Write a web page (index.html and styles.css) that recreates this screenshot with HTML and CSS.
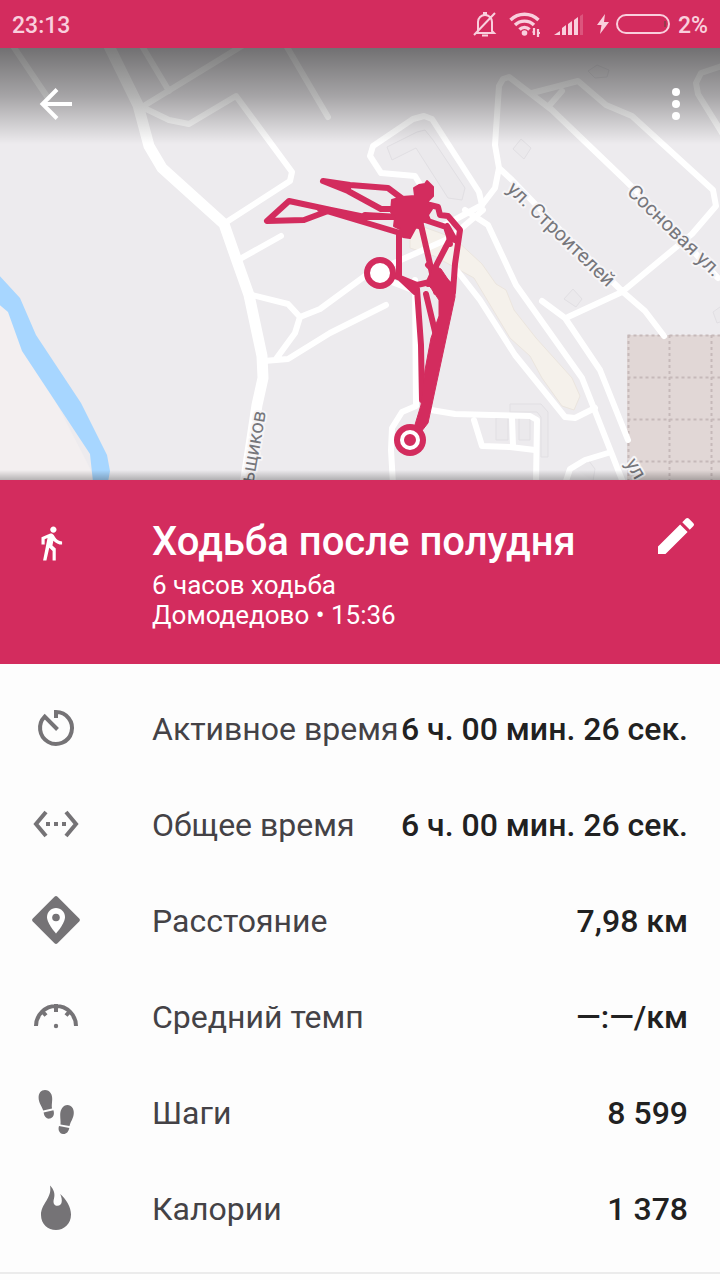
FILE: index.html
```html
<!DOCTYPE html>
<html lang="ru">
<head>
<meta charset="utf-8">
<meta name="viewport" content="width=device-width, initial-scale=1">
<title>Ходьба после полудня</title>
<link rel="stylesheet" href="styles.css">
</head>
<body>
<div class="status-bar">
  <time class="clock">23:13</time>
  <div class="status-icons">
    <svg class="bell" viewBox="0 0 24 26" width="24" height="26"><path d="M5 20V11a7 7 0 0 1 14 0v9l2 2H3zM9 24.500h6M1 24 22 2" fill="none" stroke="currentColor" stroke-width="2"/><path d="M10 1h4v3h-4z" fill="currentColor"/></svg>
    <svg class="wifi" viewBox="0 0 32 26" width="32" height="26"><path d="M1.500 9a20 20 0 0 1 28 0M6 14a13.500 13.500 0 0 1 19 0M10.500 18.500a7 7 0 0 1 10 0" fill="none" stroke="currentColor" stroke-width="3.400"/><circle cx="15.500" cy="22" r="2.800" fill="currentColor"/><path d="M25 17v7M29 18v8M23.500 21H25M29 22h2" stroke="currentColor" stroke-width="2.200"/></svg>
    <svg class="signal" viewBox="0 0 32 26" width="32" height="26"><path d="M1 24l6-4v4zM9 17l4-3v10H9zM15 13l4-3v14h-4zM21 9l4-3v18h-4z" fill="currentColor"/><path d="M27 5l3-2v21h-3z" fill="currentColor" opacity=".25"/></svg>
    <svg class="bolt" viewBox="0 0 12 20" width="12" height="20"><path d="M8 0 0 11h4.500L3 20l9-12H7z" fill="currentColor"/></svg>
    <svg class="battery" viewBox="0 0 54 20" width="54" height="20"><rect x="1" y="1" width="52" height="18" rx="9" fill="none" stroke="currentColor" stroke-width="2"/><path d="M49 7v6" stroke="#5a4a3c" stroke-width="1"/></svg>
    <span class="percent">2%</span>
  </div>
</div>

<main>
  <section class="map" aria-label="Карта маршрута">
    <svg class="map-canvas" viewBox="0 48 720 432" preserveAspectRatio="xMidYMid slice">
      <rect y="48" width="720" height="432" fill="#edebee"/>
      <path d="M0 290 24 340 96 480H0z" fill="#f3eff0"/>
      <path d="M-4 272 20 298 36 335 81 403 107 455 110 471 108 482H93L90 454 22 351 8 312-4 302z" fill="#a7d6ff"/>
      <path d="M627 335h95v147H627z" fill="#e1d7d6"/>
      <path d="M627.500 335.500H720M627.500 377.500H720M627.500 419.500H720M627.500 461.500H720M628.500 335v145M669.500 335v145M711.500 335v145" fill="none" stroke="#c6b9b9" stroke-width="2" stroke-dasharray="3 3"/>

      <path d="M410 222l44 16 28 26 14 20 10 6 8 20 22 28 18 20 18 20 8 18-6 14-12-4-20-28-12-22-20-18-36-60-40-22-24-8z" fill="#f5f1eb" stroke="#ebe5de"/>
      <g fill="#ebe9ec" stroke="#e1dfe3">
        <path d="M387 147l30-15 8-2 8 10 32 48-3 12-14-2-32-50-24 12z"/>
        <path d="M521 139l10 9-7 11-11-10zM573 289l9 10-6 8-12-8zM597 65l12 5-2 7-12 1-7-7z"/>
        <path d="M496 418h12v22h-12zM519 418h11v22h-11zM510 404h31l7 8v45h-7v-40l-4-5h-27z"/>
        <path d="M574 468l15-7 6 8-2 12M720 307l-7 5 4 11 6-2"/>
      </g>

      <g fill="none" stroke="#fff" stroke-linecap="round" stroke-linejoin="round">
        <path d="M107 42 138 105 149 146 162 168 224 224 238 264 249 295 262 356 263 378 257 405 245 485" stroke-width="11"/>
        <path d="M13 46 48 98M142 46 169 91M142 107 245 44M142 107 169 120 189 124 236 96 292 172 290 181 225 223M284 42 328 117M281 236 240 259" stroke-width="6"/>
        <path d="M252 295 288 304 300 317 320 309 365 276 450 238 483 210M300 317 295 333 276 359M264 361 288 359 330 333 386 305" stroke-width="6"/>
        <path d="M421 186 415 176 381 173 370 156 373 146 413 119 424 116 432 119 479 192 482 205 445 225M384 279 410 289" stroke-width="6"/>
        <path d="M415 280 416 406 402 412 392 428 391 450 393 484M431 410 455 414 530 416 537 420 536 484" stroke-width="6"/>
        <path d="M482 205 495 188 499 168 495 145 499 86 503 79 509 77 552 110 625 180 660 215 718 278M532 93 578 81 606 105 632 116 713 190 716 206 692 234 622 292 568 317M562 91 548 107M499 168 512 180 570 240 623 292" stroke-width="6"/>
        <path d="M542 301 565 318 600 370 628 440M623 292 645 311 664 336M465 210 488 225 516 285 582 378 624 485" stroke-width="6"/>
        <path d="M455 268 480 300 515 355 565 417 575 418 595 408M608 453 585 460 570 469 565 484M474 420 482 446 510 447 535 450M512 418 513 446" stroke-width="6"/>
        <path d="M722 66 710 70 701 73 696 83 698 94 724 136" stroke-width="6"/>
      </g>

      <g class="street">
        <text transform="translate(506 190) rotate(44)">ул. Строителей</text>
        <text transform="translate(626 193) rotate(44)">Сосновая ул.</text>
        <text transform="translate(266 412) rotate(-80)" text-anchor="end">ьщиков</text>
        <text transform="translate(625 463) rotate(60)">ул</text>
      </g>

      <g fill="none" stroke="#d32c5e" stroke-width="6" stroke-linejoin="round" stroke-linecap="round">
        <path d="M400 209 381 209 348 191 323 181 350 185 388 188 404 200M348 186V190"/>
        <path d="M400 217 365 217 331 210 289 201 267 221 304 220 328 211M320 209 360 221 400 233M365 215 400 217"/>
        <path d="M430 205 438 207 440 215 448 216 460 230 455 264 453 292"/>
        <path d="M425 220 446 227 450 239 437 264 428 284M449 236 450 244M421 225 430 264 436 292M447 226 455 240"/>
        <path d="M399 234V277L415 292M388 273 417 285 430 282M417 289 421 345 422 400M426 294 437 340M428 265 450 285"/>
      </g>
      <path d="M392 200l10-3 13-1-1-8 5-3 6-1 2-3 6 6 0 9-5 5 4 8-4 6 2 5-7 2-2 7-5-2-6 11-7-1-3-8-6-3 1-8-4-6z" fill="#d32c5e" stroke="#d32c5e" stroke-width="2" stroke-linejoin="round"/>
      <path d="M428 285l5-20 8 4 14 21 0 7-27 126-7 9-7-4 7-23 4-35 6-32 8-22 0-16-8-12z" fill="#d32c5e" stroke="#d32c5e" stroke-linejoin="round"/>
      <circle cx="380" cy="273" r="13" fill="#fff" stroke="#d32c5e" stroke-width="6"/>
      <circle cx="410" cy="440" r="16" fill="#d32c5e"/>
      <circle cx="410" cy="440" r="8" fill="#d32c5e" stroke="#fff" stroke-width="4"/>
    </svg>
    <div class="map-actions">
      <button class="icon-button" type="button" aria-label="Назад">
        <svg viewBox="0 0 48 48" width="48" height="48"><path d="M40 24H12M25 9.500 10.500 24 25 38.500" fill="none" stroke="currentColor" stroke-width="4"/></svg>
      </button>
      <button class="icon-button" type="button" aria-label="Ещё">
        <svg viewBox="0 0 48 48" width="48" height="48" fill="currentColor"><circle cx="24" cy="12" r="4"/><circle cx="24" cy="24" r="4"/><circle cx="24" cy="36" r="4"/></svg>
      </button>
    </div>
  </section>

  <header class="summary">
    <svg class="walk" viewBox="0 0 24 24" width="38" height="38" fill="currentColor"><path d="M13.500 5.500c1.100 0 2-.9 2-2s-.9-2-2-2-2 .9-2 2 .9 2 2 2zM9.800 8.900 7 23h2.100l1.800-8 2.100 2v6h2v-7.500l-2.100-2 .6-3C14.800 12 16.800 13 19 13v-2c-1.900 0-3.500-1-4.300-2.400l-1-1.600c-.4-.6-1-1-1.700-1-.3 0-.5.100-.8.100L6 8.300V13h2V9.600z"/></svg>
    <div class="summary-text">
      <h1>Ходьба после полудня</h1>
      <p>6 часов ходьба</p>
      <p>Домодедово • 15:36</p>
    </div>
    <button class="icon-button" type="button" aria-label="Изменить">
      <svg viewBox="0 0 24 24" width="48" height="48" fill="currentColor"><path d="M3 17.250V21h3.750L17.810 9.940l-3.750-3.750zM20.710 7.040a1 1 0 0 0 0-1.410l-2.340-2.340a1 1 0 0 0-1.410 0l-1.830 1.830 3.750 3.750z"/></svg>
    </button>
  </header>

  <dl class="stats">
    <div class="stat">
      <dt><svg viewBox="0 0 48 48" width="48" height="48"><path d="M24 14V8A16 16 0 1 1 12.700 12.700L25.500 25.500" fill="none" stroke="currentColor" stroke-width="4"/></svg><span>Активное время</span></dt>
      <dd>6 ч. 00 мин. 26 сек.</dd>
    </div>
    <div class="stat">
      <dt><svg viewBox="0 0 48 48" width="48" height="48"><path d="M14 12 4 24 14 36M34 12 44 24 34 36" fill="none" stroke="currentColor" stroke-width="4"/><path d="M14 22h4v4h-4zM22 22h4v4h-4zM30 22h4v4h-4z" fill="currentColor"/></svg><span>Общее время</span></dt>
      <dd>6 ч. 00 мин. 26 сек.</dd>
    </div>
    <div class="stat">
      <dt><svg viewBox="0 0 48 48" width="48" height="48"><path d="M22.500.800Q24-.6 25.500.800L47.200 22.500Q48.600 24 47.200 25.500L25.500 47.200Q24 48.600 22.500 47.200L.8 25.500Q-.6 24 .8 22.500z" fill="currentColor"/><path d="M24 12c-5 0-9 4-9 9 0 6.500 9 16.500 9 16.500S33 27.500 33 21c0-5-4-9-9-9z" fill="#fff"/><circle cx="24" cy="21.500" r="3.800" fill="currentColor"/></svg><span>Расстояние</span></dt>
      <dd>7,98 км</dd>
    </div>
    <div class="stat">
      <dt><svg viewBox="0 0 48 48" width="48" height="48"><path d="M4 34a20 20 0 0 1 40 0M24 12v8M10 19l4 4.500M38 19l-4 4.500" fill="none" stroke="currentColor" stroke-width="4"/><circle cx="24" cy="34" r="2.200" fill="currentColor"/></svg><span>Средний темп</span></dt>
      <dd>—:—/км</dd>
    </div>
    <div class="stat">
      <dt><svg viewBox="0 0 48 48" width="48" height="48" fill="currentColor"><path d="M13 2c5 0 7.500 4.500 7.200 9.500-.2 4-.7 6-.2 9L11.200 22.500C10 18.500 6.600 15 6.600 9.500 6.600 5 9 2 13 2zM11.600 24.500l9.800-2.200c1.500 4-.2 7.700-3.600 8.300-3.300.5-5.500-1.600-6.200-6.100zM35.500 17c4 .2 6.500 3.500 6.300 8-.2 5.500-3.300 8.500-4.300 13L28.500 36.500c.3-3.500-.3-5.500-.3-9.500 0-5.500 2.800-10 7.300-10zM27 38l10.300 2c-.8 4-3.200 6.400-6.300 6-3.500-.4-5.300-4-4-8z"/></svg><span>Шаги</span></dt>
      <dd>8 599</dd>
    </div>
    <div class="stat">
      <dt><svg viewBox="0 0 48 48" width="48" height="48" fill="currentColor"><path d="M18 1.500c4 4 5.300 8.500 4 13-1.200 4-.2 7.300 3.500 7.300 4.700 0 5.500-5.300 2.700-11.800C34 15 39 23 39 30.500 39 40 32 46 24 46S9 40 9 31C9 19.500 20.500 14 18 1.500z"/></svg><span>Калории</span></dt>
      <dd>1 378</dd>
    </div>
  </dl>
</main>
</body>
</html>
```
FILE: styles.css
```css
* {
  box-sizing: border-box;
}

body {
  margin: 0;
  background: #fdfdfd;
  color: #212121;
  font-family: Roboto, "Noto Sans", sans-serif;
}

h1,
p,
dl,
dd {
  margin: 0;
}

svg {
  display: block;
  flex: none;
}

.status-bar {
  display: flex;
  align-items: center;
  justify-content: space-between;
  height: 48px;
  padding: 0 12px;
  background: #d32c5e;
  color: #f9cfdd;
  font-size: 23px;
  font-weight: 500;
}

.clock,
.percent {
  padding-top: 2px;
}

.status-icons {
  display: flex;
  align-items: center;
}

.wifi,
.signal,
.bolt {
  margin-left: 12px;
}

.battery {
  margin-left: 7px;
}

.percent {
  margin-left: 8px;
}

.map {
  position: relative;
  aspect-ratio: 5 / 3;
  overflow: hidden;
}

.map::before,
.map::after {
  content: "";
  position: absolute;
  left: 0;
  right: 0;
}

.map::before {
  top: 0;
  height: 96px;
  background: linear-gradient(rgba(0, 0, 0, 0.52), rgba(0, 0, 0, 0.3) 50%, rgba(0, 0, 0, 0));
}

.map::after {
  bottom: 0;
  height: 10px;
  background: linear-gradient(rgba(0, 0, 0, 0), rgba(0, 0, 0, 0.25));
}

.map-canvas {
  width: 100%;
  height: 100%;
}

.street {
  fill: #77777c;
  stroke: #f6f5f7;
  stroke-width: 4px;
  stroke-linejoin: round;
  paint-order: stroke;
  font-size: 20px;
}

.map-actions {
  position: absolute;
  z-index: 1;
  top: 32px;
  left: 32px;
  right: 20px;
  display: flex;
  justify-content: space-between;
}

.icon-button {
  padding: 0;
  border: 0;
  background: none;
  color: #fff;
}

.summary {
  display: flex;
  align-items: flex-start;
  padding: 32px 20px 34px 32px;
  background: #d32c5e;
  color: #fff;
}

.walk {
  margin: 12px 82px 0 0;
}

.summary-text {
  flex: 1;
  padding-top: 5px;
}

.summary h1 {
  margin-bottom: 3px;
  font-size: 40px;
  font-weight: 500;
  line-height: 50px;
}

.summary p {
  font-size: 26px;
  line-height: 30px;
}

.stats {
  padding: 16px 0;
  border-bottom: 2px solid #ebebeb;
}

.stat {
  display: flex;
  align-items: center;
  justify-content: space-between;
  height: 96px;
  padding: 0 32px;
  font-size: 32px;
  white-space: nowrap;
}

.stat dt {
  display: flex;
  align-items: center;
  gap: 72px;
  color: #444246;
}

.stat dt svg {
  color: #757376;
}

.stat dd {
  font-weight: 500;
}

.stat span,
.stat dd {
  padding-top: 2px;
}
```
